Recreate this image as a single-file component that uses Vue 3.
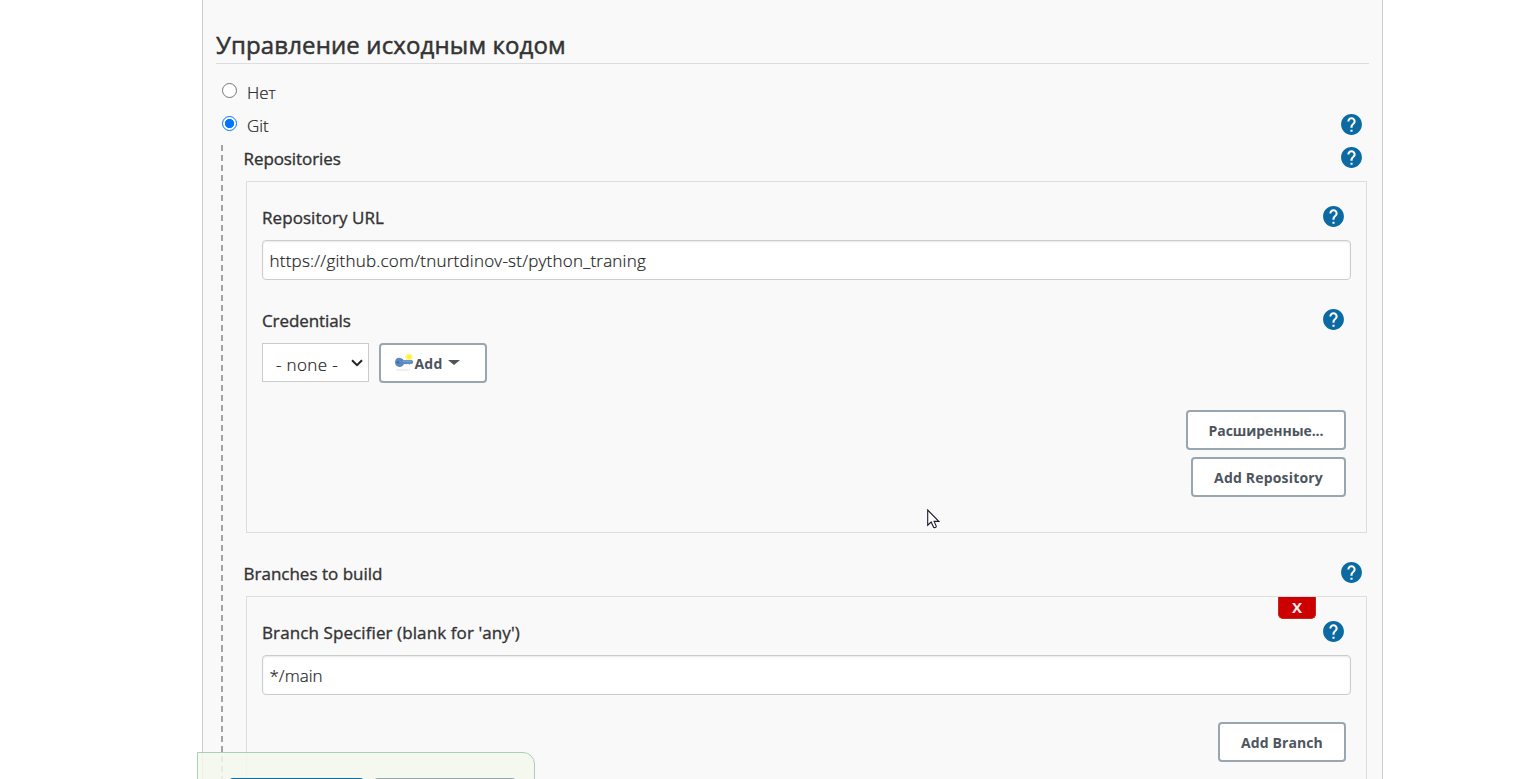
<script setup>
import { h } from 'vue'

const HelpIcon = () =>
  h('svg', { class: 'help', viewBox: '0 0 24 24', width: 25, height: 25 }, [
    h('circle', { cx: 12, cy: 12, r: 9, fill: '#fff' }),
    h('path', {
      fill: '#0b6aa2',
      d: 'M12 2C6.48 2 2 6.48 2 12s4.48 10 10 10 10-4.48 10-10S17.52 2 12 2zm1 17h-2v-2h2v2zm2.07-7.75l-.9.92C13.45 12.9 13 13.5 13 15h-2v-.5c0-1.1.45-2.1 1.17-2.83l1.24-1.26c.37-.36.59-.86.59-1.41 0-1.1-.9-2-2-2s-2 .9-2 2H8c0-2.21 1.79-4 4-4s4 1.79 4 4c0 .88-.36 1.68-.93 2.25z',
    }),
  ])
</script>

<template>
  <div class="page">
    <main class="panel">
      <h2 class="title"><span>Управление исходным кодом</span></h2>

      <div class="row option">
        <i class="radio"></i><span class="t-no">Нет</span>
      </div>
      <div class="row option">
        <i class="radio on"></i><span class="t-git">Git</span>
        <HelpIcon class="end" />
      </div>

      <section class="nested">
        <div class="row heading">
          <span class="label t-repos">Repositories</span>
          <HelpIcon class="end" />
        </div>
        <div class="box repo">
          <div class="row">
            <span class="label t-url">Repository URL</span>
            <HelpIcon class="end" />
          </div>
          <div class="field"><span class="t-link">https://github.com/tnurtdinov-st/python_traning</span></div>
          <div class="row cred">
            <span class="label t-cred">Credentials</span>
            <HelpIcon class="end" />
          </div>
          <div class="controls">
            <div class="select">
              <span class="t-none">- none -</span>
              <svg width="12" height="8" viewBox="0 0 12 8"><path d="M1 1.2 6 6.2 11 1.2" fill="none" stroke="#222" stroke-width="2" /></svg>
            </div>
            <div class="btn add">
              <svg class="key" width="20" height="20" viewBox="0 0 20 20">
                <ellipse cx="9" cy="18" rx="7.5" ry="1.3" fill="#efeff1" />
                <circle cx="15" cy="5" r="3.6" fill="#fbf78b" />
                <circle cx="15" cy="5" r="2" fill="#fff42c" />
                <path d="M5 5.800c2.200 0 3.700.900 4.400 2.300h8.600l1.200 1.500-.8 2.400-1.800-.3-1.300.8-1.400-.8-1.300.6-2.600-.4c-.8 1.900-2.500 3-4.600 3C2.600 14.900 1 12.900 1 10.300s1.700-4.500 4-4.500z" fill="#5b88c2" />
                <path d="M9 9.200h8.500" stroke="#7fa5d5" stroke-width="1.200" />
                <circle cx="4" cy="10.200" r="1.200" fill="#3c6aa6" />
              </svg>
              <span class="t-add">Add</span>
              <i class="caret"></i>
            </div>
          </div>
          <div class="actions">
            <div class="btn w160"><span class="t-adv">Расширенные...</span></div>
            <div class="btn w155"><span class="t-addrepo">Add Repository</span></div>
          </div>
        </div>

        <div class="row heading second">
          <span class="label t-branches">Branches to build</span>
          <HelpIcon class="end" />
        </div>
        <div class="box branch">
          <div class="delete">X</div>
          <div class="row">
            <span class="label t-spec">Branch Specifier (blank for 'any')</span>
            <HelpIcon class="end" />
          </div>
          <div class="field"><span class="t-main">*/main</span></div>
          <div class="actions">
            <div class="btn w128"><span class="t-addbranch">Add Branch</span></div>
          </div>
        </div>
      </section>
    </main>

    <footer class="savebar">
      <div class="save"></div>
      <div class="apply"></div>
    </footer>

    <svg class="pointer" width="13" height="20" viewBox="0 0 13 20">
      <path d="M.7 1v15.200l3.500-3.200 2.400 5.300c.8.700 2.500 0 2.700-1l-2.200-4.900h4.700z" fill="#fff" stroke="#1b1b2b" stroke-width="1.100" />
    </svg>
  </div>
</template>

<style>
body { margin: 0; background: #fff; overflow: hidden; }
</style>

<style scoped>
.page {
  position: relative;
  width: 1513px;
  height: 779px;
  overflow: hidden;
  font-family: "Open Sans", "Noto Sans", sans-serif;
  font-size: 17px;
  font-weight: 300;
  color: #222;
}
.page * { box-sizing: border-box; }
.page span { white-space: nowrap; }
.panel {
  width: 1181px;
  height: 900px;
  margin-left: 202px;
  padding: 28px 13px 0;
  border: solid #ccc;
  border-width: 0 1px;
  background: #f9f9f9;
}
.title {
  height: 36px;
  margin: 0 0 12px;
  border-bottom: 1px solid #ddd;
  color: #333;
  font-size: 24px;
  font-weight: 400;
  letter-spacing: .13px;
  line-height: 33px;
  -webkit-text-stroke: .5px #333;
}
.row { display: flex; align-items: center; height: 33px; }
.option { padding: 0 6px; }
.option span { margin-left: 10px; letter-spacing: -.1px; }
.option span, .field span, .select span { -webkit-text-stroke: .2px #222; }
.radio {
  width: 15px;
  height: 15px;
  margin-top: -4px;
  border: 1px solid #767676;
  border-radius: 50%;
  background: #fff;
}
.radio.on { border: 1.500px solid #0075ff; background: radial-gradient(circle, #0075ff 4.300px, #fff 4.900px); }
.end { margin-left: auto; margin-right: -1px; flex: none; position: relative; top: -1px; }
.nested {
  margin: 3px 0 0 5px;
  padding-left: 23px;
  background: repeating-linear-gradient(#a3a3a3 0 6px, transparent 6px 10.010px) 0 0 / 2px 100% no-repeat;
}
.heading { height: 30px; padding-right: 6px; align-items: center; }
.heading .label { position: relative; top: -2px; left: -.5px; }
.heading .end { top: -3px; }
.label { color: #333; font-weight: 400; -webkit-text-stroke: .35px #333; }
.box { margin: 6px 2px 0; border: 1px solid #ddd; padding: 20px 15px 0; position: relative; }
.repo { height: 352px; }
.branch { height: 230px; }
.box .row { padding-right: 6px; }
.box .row .label { position: relative; top: -1px; }
.box .row .end { top: -2px; }
.field {
  display: flex;
  align-items: center;
  height: 40px;
  margin-top: 5px;
  padding: 0 7px 0 6.500px;
  border: 1px solid #ccc;
  border-radius: 4px;
  background: #fff;
  box-shadow: inset 0 1px 2px #00000018;
}
.cred { margin-top: 25px; }
.controls { display: flex; gap: 10px; margin-top: 5px; }
.select {
  display: flex;
  align-items: center;
  justify-content: space-between;
  width: 107px;
  height: 39px;
  padding: 3px 5px 0 13px;
  border: 1px solid #ccc;
  background: #fff;
}
.select svg { margin-top: -3px; }
.btn {
  display: flex;
  align-items: center;
  justify-content: center;
  height: 40px;
  border: 2px solid #98a6b0;
  border-radius: 4px;
  background: #fff;
  color: #4d545d;
  font-size: 14px;
  font-weight: 700;
}
.add { width: 108px; justify-content: flex-start; padding-left: 13px; }
.key { margin-top: -2px; margin-right: .5px; }
.caret { margin-left: 6px; border: solid transparent; border-width: 5px 6px 0; border-top-color: #4d545d; margin-top: -2px; }
.actions { display: flex; flex-direction: column; align-items: flex-end; gap: 7px; margin: 27px 5px 0 0; }
.w160 { width: 160px; }
.w155 { width: 155px; }
.w128 { width: 128px; }
.second { margin-top: 27px; }
.second + .box { margin-top: 6px; }
.t-repos { letter-spacing: -.08px; }
.t-url { letter-spacing: .07px; }
.t-spec { letter-spacing: .1px; }
.t-cred { letter-spacing: -.09px; }
.t-link { letter-spacing: .225px; }
.t-none { letter-spacing: .35px; }
.t-adv { letter-spacing: -.08px; }
.t-addrepo { letter-spacing: .18px; }
.t-addbranch { letter-spacing: .1px; }
.t-add { letter-spacing: .2px; }
.delete {
  position: absolute;
  top: 0;
  right: 50px;
  width: 38px;
  height: 22px;
  border: 1px solid #c4281b;
  border-top: 0;
  border-radius: 0 0 5px 5px;
  background: #c00;
  color: #eee;
  font-size: 15px;
  font-weight: 700;
  line-height: 21px;
  text-align: center;
}
.savebar {
  position: absolute;
  left: 197px;
  top: 752px;
  display: flex;
  gap: 10px;
  width: 338px;
  height: 60px;
  padding: 25px 0 0 31px;
  border: 1px solid #a9cfbc;
  border-radius: 0 12px 0 0;
  background: rgba(245, 248, 237, .85);
}
.save, .apply { height: 40px; border-radius: 4px; }
.save { width: 135px; background: #0b6aa2; }
.apply { width: 142px; border: 2px solid #98a6b0; background: #fff; }
.pointer { position: absolute; left: 927px; top: 509px; }
</style>
